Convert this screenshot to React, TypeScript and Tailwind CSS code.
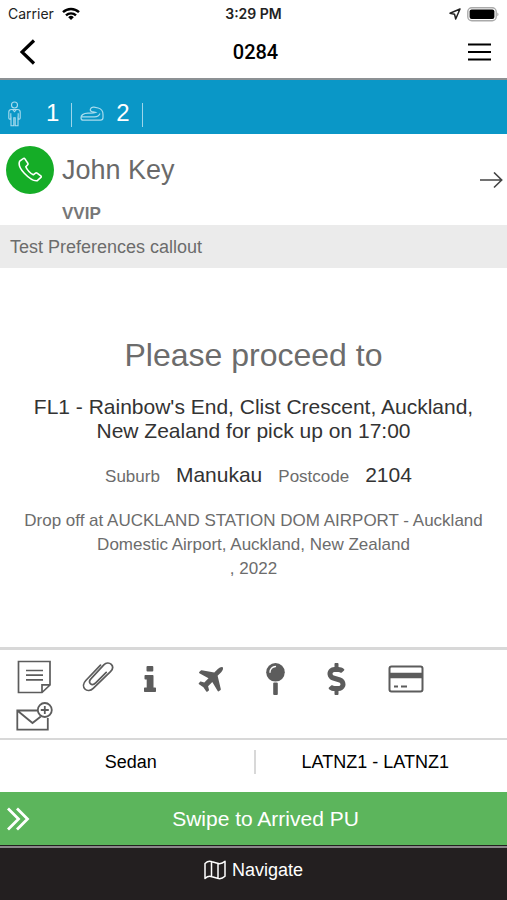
import React from "react";
import { FaDollarSign } from "react-icons/fa";

const line = { fill: "none", stroke: "currentColor" } as const;

function StatusBar() {
  return (
    <div className="grid h-7 grid-cols-3 items-center px-2 font-['Inter',sans-serif] text-sm leading-5 text-[#222]">
      <div className="flex items-center gap-2">
        <span>Carrier</span>
        <svg width="18" height="14" viewBox="0 0 18 14" {...line} strokeWidth="2.4" className="text-black" aria-hidden="true">
          <path d="M1 5.2a11.5 11.5 0 0 1 16 0M4 8.4a7.2 7.2 0 0 1 10 0" />
          <path d="M9 13 6.2 10.2a4 4 0 0 1 5.6 0Z" fill="currentColor" stroke="none" />
        </svg>
      </div>
      <span className="text-center font-semibold">3:29 PM</span>
      <div className="flex items-center justify-end gap-[6px]">
        <svg width="12" height="12" viewBox="0 0 12 12" {...line} strokeWidth="1.5" strokeLinejoin="round" aria-hidden="true">
          <path d="M11 1 1 5.2l4.6 1.1L6.7 11Z" />
        </svg>
        <svg width="32" height="15" viewBox="0 0 32 15" aria-hidden="true">
          <rect x=".8" y=".8" width="28.4" height="13" rx="4" fill="none" stroke="#aaa" strokeWidth="1.4" />
          <rect x="2.6" y="2.6" width="24.8" height="9.4" rx="2" fill="#000" />
          <path d="M30.3 5.5c1.6.5 1.6 3.3 0 3.8Z" fill="#aaa" />
        </svg>
      </div>
    </div>
  );
}

function NavBar() {
  return (
    <header className="flex h-[52px] items-center justify-between border-b-2 border-[#8c9194] pr-4 pb-[2px] pl-5">
      <button aria-label="Back" className="flex h-8 w-8 items-center">
        <svg width="16" height="26" viewBox="0 0 16 26" {...line} strokeWidth="3.2">
          <path d="M14 1.5 2 13l12 11.5" />
        </svg>
      </button>
      <h1 className="font-['Roboto',sans-serif] text-[20px] leading-6 font-medium">0284</h1>
      <button aria-label="Menu" className="flex h-8 w-8 items-center justify-end">
        <svg width="23" height="18" viewBox="0 0 23 18" {...line} strokeWidth="2">
          <path d="M0 1.500h23M0 9h23M0 16.500h23" />
        </svg>
      </button>
    </header>
  );
}

function Counts() {
  return (
    <div className="flex h-[54px] items-end bg-[#0a97c7] px-2 pb-[7px] text-[24px] leading-7 text-white">
      <svg width="13" height="26" viewBox="0 0 13 26" {...line} strokeWidth="1.1" className="text-[#a9dcee]" role="img" aria-label="Passengers">
        <circle cx="6.5" cy="4" r="3" />
        <path d="M3.5 8.500h6c1.600 0 2.700 1 2.700 2.500v6c0 .7-.4 1.100-1 1.100s-1-.4-1-1.100v-4.800M2.800 12.200v4.800c0 .7-.4 1.100-1 1.100s-1-.4-1-1.100v-6c0-1.500 1.100-2.500 2.700-2.500M4.500 8.500l2 2.200 2-2.200M3 15.500v9.300h2.800v-8h1.400v8H10v-9.300" />
      </svg>
      <span className="ml-[25px]">1</span>
      <span className="ml-3 h-6 w-px bg-[#9dd5ea]" />
      <svg width="24" height="26" viewBox="0 0 24 26" {...line} strokeWidth="1.2" className="ml-2 text-[#a9dcee]" role="img" aria-label="Bags">
        <path d="M1 16.800c0-2.900 2.900-4.500 7-4.700 2.500-.1 5 .4 7.600-.7l-3.600-.8c-1.300-.4-2-1.200-1.600-2.500.4-1.500 1.700-2.300 3.600-2l4.200.9c3.300.8 4.800 3.200 4.800 6.500v3c0 1.800-.8 2.700-2.500 2.700H3c-1.300 0-2-1-2-2.400ZM1.300 15.800h13.200c3 0 4.700-1 5.500-3.300" />
      </svg>
      <span className="ml-3">2</span>
      <span className="ml-3 h-6 w-px bg-[#9dd5ea]" />
    </div>
  );
}

function Contact() {
  return (
    <section>
      <div className="flex h-[91px] items-start pt-3 pr-1 pl-[6px]">
        <button aria-label="Call John Key" className="flex h-12 w-12 shrink-0 items-center justify-center rounded-full bg-[#15ad27] text-white">
          <svg width="26" height="26" viewBox="0 0 26 26" {...line} strokeWidth="1.6" strokeLinejoin="round">
            <path d="M6.200 1.700 2.700 4.200c-1.400 3 .1 7.300 4.600 12 4.800 5 9.400 8.200 13 7.500l3.600-3.300c.5-.5.4-1-.1-1.500l-3.700-2.800c-.6-.4-1.100-.4-1.600 0l-2.200 1.700c-2.600-1.300-6.500-5-7.500-8l1.900-2c.5-.5.4-1 .1-1.600L7.900 1.900c-.5-.7-1.100-.7-1.700-.2Z" />
          </svg>
        </button>
        <div className="ml-2 grow text-[#6a6a6a]">
          <h2 className="pt-2 text-[27px] leading-8">John Key</h2>
          <p className="pt-4 text-[17px] leading-6 font-bold text-[#777]">VVIP</p>
        </div>
        <button aria-label="Contact details" className="mt-6 flex h-5 items-center text-[#444]">
          <svg width="23" height="17" viewBox="0 0 23 17" {...line} strokeWidth="1.6">
            <path d="M0 8h21.500M14 .5l7.700 7.500L14 15.500" />
          </svg>
        </button>
      </div>
      <p className="h-[43px] bg-[#ebebeb] px-[10px] pt-[10px] text-[18px] leading-6 text-[#6c6c6c]">Test Preferences callout</p>
    </section>
  );
}

function Toolbar() {
  return (
    <div className="border-t-[3px] border-[#d8d8d8] px-4 pt-[10px] pb-[6px] text-[#5c5c5c]">
      <div className="flex h-[38px] items-center gap-[30px]">
        <button aria-label="Notes">
          <svg width="36" height="34" viewBox="0 0 36 34" {...line} strokeWidth="1.700" className="-mt-1">
            <path d="M2.500 1.500h31.500v23.500l-8 7.500H2.500ZM26 32v-7.200h8M10 10.500h17M10 15.200h17M10 19.900h17" />
          </svg>
        </button>
        <button aria-label="Attachments">
          <svg width="32" height="32" viewBox="0 0 32 32" {...line} strokeWidth="1.700" strokeLinecap="round" strokeLinejoin="round" className="-mt-1">
            <path d="M18.500 4.200 3.800 19.500c-2.600 2.700-3 6.300-.9 8.500s5.700 2 8.300-.6L28.500 10.600c2.300-2.300 2.700-5.200.8-7.200-2-2-5.200-1.900-7.500.4L9.300 17.300c-1.900 1.900-2.200 4-.9 5.400 1.300 1.300 3.500 1 5.300-.8l10.500-10.500" />
          </svg>
        </button>
        <div className="flex items-center gap-[42px]">
          <button aria-label="Information">
            <svg width="12" height="26" viewBox="0 0 12 26" fill="currentColor">
              <rect x="2.500" y="0" width="6.800" height="5.500" rx="1" />
              <path d="M1.500 9h7c.6 0 1 .4 1 1v11.500H11c.6 0 1 .4 1 1V25c0 .6-.4 1-1 1H1c-.6 0-1-.4-1-1v-2.500c0-.6.400-1 1-1h1.700V13.500H1.500c-.6 0-1-.4-1-1V10c0-.6.400-1 1-1Z" />
            </svg>
          </button>
          <button aria-label="Flight">
            <svg width="26" height="26" viewBox="0 0 26 26" fill="currentColor">
              <path d="M24.700 1.200c.8.900.2 3.200-1.500 5l-3.600 3.600 3.200 13.300c.1.300 0 .6-.2.800l-1.800 1.400c-.4.3-.9.200-1.100-.2L14.300 16l-4.200 4.200.9 3.600c.1.300 0 .5-.2.700l-1.500 1.200c-.3.300-.8.200-1-.2L5.400 21.200 1 18.300c-.4-.2-.5-.7-.2-1l1.300-1.500c.2-.2.400-.3.700-.2l3.500.9 4.200-4.200L1.400 7.200c-.4-.2-.5-.7-.2-1.100l1.700-1.700c.2-.2.500-.3.800-.2l12.600 2.400 3.500-3.500c1.800-1.800 4.100-2.700 4.900-1.900Z" />
            </svg>
          </button>
          <button aria-label="Location">
            <svg width="19" height="32" viewBox="0 0 19 32">
              <circle cx="9.500" cy="9.300" r="9.300" fill="currentColor" />
              <path d="M4 9.300a5.500 5.500 0 0 1 5.500-5.800" fill="none" stroke="#fff" strokeWidth="1.300" strokeLinecap="round" />
              <rect x="7.200" y="19.600" width="4.600" height="12.400" rx="1" fill="currentColor" />
            </svg>
          </button>
          <button aria-label="Price"><FaDollarSign className="h-8 w-[19px]" /></button>
          <button aria-label="Payment card">
            <svg width="36" height="28" viewBox="0 0 36 28" {...line} strokeWidth="2">
              <rect x="1.500" y="1.500" width="33" height="25" rx="2" />
              <path d="M1.500 10.500h33" strokeWidth="5.500" />
              <path d="M6 21.500h4M13 21.500h6" />
            </svg>
          </button>
        </div>
      </div>
      <button aria-label="New message" className="block pt-1">
        <svg width="38" height="30" viewBox="0 0 38 30" {...line} strokeWidth="1.800">
          <path d="M22 8.500H1.300v19.200h30.500V16M1.300 8.500l15.200 12.500 8.300-6.500" />
          <circle cx="28.800" cy="8" r="7" />
          <path d="M28.800 4v8M24.800 8h8" />
        </svg>
      </button>
    </div>
  );
}

export default function App() {
  return (
    <div className="flex min-h-screen w-full flex-col bg-white font-['Liberation_Sans',Arial,sans-serif] text-black">
      <StatusBar />
      <NavBar />
      <Counts />
      <Contact />
      <main className="flex grow flex-col items-center justify-center px-4 text-center text-[17px] leading-6 text-[#6c6c6c]">
        <h2 className="text-[32px] leading-10">Please proceed to</h2>
        <p className="mt-5 text-[21px] leading-6 text-[#333]">
          FL1 - Rainbow's End, Clist Crescent, Auckland, New Zealand for pick up on 17:00
        </p>
        <dl className="mt-5 flex items-baseline pl-[10px]">
          <dt>Suburb</dt>
          <dd className="ml-4 text-[21px] text-[#333]">Manukau</dd>
          <dt className="ml-4">Postcode</dt>
          <dd className="ml-4 text-[21px] text-[#333]">2104</dd>
        </dl>
        <p className="mt-5">
          Drop off at AUCKLAND STATION DOM AIRPORT - Auckland Domestic Airport, Auckland, New Zealand
          <br />, 2022
        </p>
      </main>
      <Toolbar />
      <div className="grid h-[54px] grid-cols-2 items-center border-t-2 border-[#d8d8d8] pb-2 text-center text-[18px] leading-6">
        <span className="pl-2">Sedan</span>
        <span className="border-l-2 border-[#d8d8d8] pr-3">LATNZ1 - LATNZ1</span>
      </div>
      <button className="grid h-[53px] w-full grid-cols-[24px_1fr_24px] items-center bg-[#5cb55c] px-[6px] text-[21px] leading-6 text-white">
        <svg width="24" height="24" viewBox="0 0 24 24" {...line} strokeWidth="2.800" aria-hidden="true">
          <path d="M2 1.500 12.500 12 2 22.500M11 1.500 21.500 12 11 22.500" />
        </svg>
        <span className="pl-6">Swipe to Arrived PU</span>
      </button>
      <div className="border-t border-[#231f20]">
        <button className="flex h-[54px] w-full items-start justify-center gap-[6px] border-t-2 border-[#8a8789] bg-[#231f20] pt-[10px] text-[18px] leading-6 text-white">
          <svg width="22" height="20" viewBox="0 0 22 20" {...line} strokeWidth="1.500" strokeLinejoin="round" className="mt-[2px]" aria-hidden="true">
            <path d="M1 3.500C3.500 1.200 6 1 8 1.800l5.500 1.500c2.500.8 5 .2 7.500-2v15c-2.500 2.200-5 2.800-7.500 2L8 16.800c-2-.8-4.500-.6-7 1.700ZM7.500 1.800v15M14 3.500v15" />
          </svg>
          <span>Navigate</span>
        </button>
      </div>
    </div>
  );
}
